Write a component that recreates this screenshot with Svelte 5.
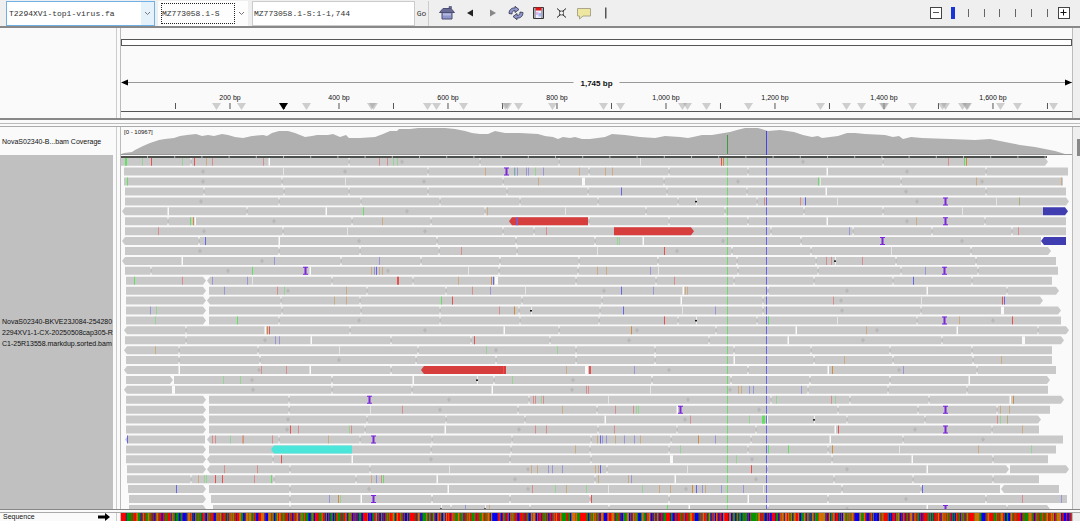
<script>
    const LEFT = 121;
    const WIDTH = 951;
    const LENGTH = 1745;
    const ROW_HEIGHT = 9.92;

    let genome = 'T2294XV1-top1-virus.fa';
    let contig = 'MZ773058.1-S';
    let locus = 'MZ773058.1-S:1-1,744';
    let zoomLevel = 0;

    const pct = (x) => `${((x - LEFT) / WIDTH) * 100}%`;
    const bpPct = (bp) => `${(bp / LENGTH) * 100}%`;

    const ticks = Array.from({ length: 17 }, (_, i) => (i + 1) * 100);
    const labels = [200, 400, 600, 800, 1000, 1200, 1400, 1600];
    const regions = [
        216, 241, 306, 371, 373, 427, 436, 463, 505, 507, 518, 552, 603, 620, 682, 687, 706, 748,
        820, 846, 861, 883, 884, 912, 942, 945, 962, 966, 967, 1000, 1017, 1053,
    ];

    const coverage =
        '121,154 124,153 132,152 135,150 143,146 150,143 159,140 165,139 174,138 180,136 187,135 196,134 202,136 208,135 214,136 222,134 228,135 235,137 243,138 252,136 263,135 267,136 272,133 279,131 288,131 295,133 305,137 312,136 317,135 328,135 333,134 340,137 346,135 349,138 360,138 375,137 383,134 390,131 397,131 399,129 410,129 418,128 430,128 445,128 455,129 465,131 472,133 480,134 488,134 495,131 505,133 520,133 538,134 545,136 553,137 558,139 563,137 570,138 575,137 582,139 590,139 605,137 612,134 625,135 640,137 655,138 665,136 680,137 688,138 693,137 702,135 712,135 718,134 730,132 737,130 745,128 758,128 768,131 780,130 794,132 803,135 812,137 818,136 822,138 838,136 847,133 855,133 865,134 885,135 893,137 899,136 903,139 911,137 922,138 950,139 975,140 990,139 1000,141 1010,143 1020,145 1035,147 1045,149 1055,151 1065,154 1072,155 121,155';

    // a-b: read block, < and > its arrow ends; n: read boundary, d: overlap dot,
    // | : W: gaps, I: insertion, D: deletion, rgboy: mismatches (capital = high quality)
    const reads = [
        '121-1048> G125 G126 g142 R151 g182 n191 R194 o206 r212 r263 |269 n349 r379 r387 g393 g397 d402 n480 n559 :640 R721 O723 d803 n883 r948 G964 O966',
        '124-1068 d203 :283 d345 n428 o485 I506 b514 g515 b517 b526 b528 g535 b543 o579 n589 o605 o612 n669 n748 |827 d907 n986',
        '124-1063 G127 d203 n282 :345 d424 n503 o538 W583 n664 d738 G818 :820 n901 o976 d982 o1061',
        '125-1066 n204 n284 n349 n428 n507 n588 B621 n667 n747 |826 d906 n986',
        '125-1069> d201 n279 n361 n440 n520 n598 n678 D696 n757 r764 r800 B805 :837 d917 I945 :996 y1019',
        '<122-1043 |168 n247 |326 G363 d407 n485 o487 :565 n646 n725 n804 n883 :962 1043-1068>b',
        '125-1066 n168 G190 O193 |195 d274 n352 o382 n431 <509-588r b516 B517 n589 n669 n748 |827 d907 o916 I945 n985',
        '125-1066 r158 d204 n283 :347 d425 n503 n534 r546 614-694>r n771 b849 n853 n932 n1012 r1018',
        '<122-1041 n199 B205 |279 d359 n437 n516 n595 g617 g619 |643 d723 n801 I882 d962 <1041-1066b',
        '125-1051> d200 n279 n360 n439 r461 n517 :597 R664 d677 n732 n811 :891 n971',
        '<122-1056 |182 d262 b274 n341 b379 n421 n500 n579 n658 n737 n816 r826 r831 D835 r862 n896 n976',
        '125-1058 n151 d228 G252 I305 |310 o371 b374 B376 o379 o382 d388 :468 n499 n578 o597 o606 b650 :658 n738 n818 n901 b925 I944 n978',
        '126-206> <207-1052 G134 r182 b212 b247 :252 n332 R397 R398 n413 o458 O491 B493 W496 n576 n656 r674 n734 n814 n893 B913 n972',
        '126-206> 209-1059> b224 r277 g284 d288 o346 n367 n446 r472 b490 :525 d604 B621 b653 |683 o685 o687 n768 d847 |927 n1007',
        '126-206> <207-1043> n281 o334 o346 n360 G441 R452 n522 n602 |681 n763 r833 d841 :921 R1002 B1004',
        '126-206> 209-1061> b150 g156 n282 n361 n440 r499 O514 n519 D531 n600 B623 :682 b715 n763 d842 n921 W1002',
        '126-206> 209-1061 g155 G237 n279 d359 n440 n520 n599 R664 n678 D696 n757 G768 :837 n917 I944 o959 d993 R1012',
        '<124-1069> n186 |265 O267 R269 n350 d425 |504 n559 O631 d637 n716 |796 o866 d877 |957 n1038',
        '125-1064> n186 d265 b275 b279 |311 n391 n471 R474 n550 d629 n709 |788 d863 n942 W1023',
        '<124-1052 o155 n179 n258 :339 n418 g486 d496 g557 n576 n655 n734 n811 n890 n972',
        '126-1052 n179 n260 d339 n416 n496 n576 n655 |734 n814 o844 n893 n973 o1001',
        '<124-1056 |179 d259 r261 r286 |310 n391 <421-506r R503 o566 W586 R589 R590 b634 d669 n748 |828 O832 d899 b903 n977',
        '126-173> 174-1050> g223 g240 d252 n332 |413 D477 n494 g512 d573 n652 n731 n810 n890 |969',
        '<124-1048 W173 d253 n332 n412 |492 d572 r586 r588 :650 d730 o738 o741 b749 b753 b801 n808 n888 n967',
        '126-206> 209-1064> n289 I369 d449 n529 r533 r535 g541 r543 :608 d688 n771 g776 r831 g835 n850 n929 |1010 O1013',
        '126-206> 209-1050 n289 :370 r402 d440 n518 o562 n597 r615 r633 g636 g638 |677 I680 d759 n838 n918 I945 n997 o1000 o1009',
        '126-206> 209-1041> d288 n367 n446 n525 |605 d685 r690 g749 G762 G763 G764 |767 D814 n847 n925 r997 g1000 y1007',
        '126-206> 209-1039 d287 R290 r298 g349 r351 n365 |445 d519 r535 r546 n598 r614 n677 n756 |835 R838 d915 I945 n992 o1022',
        '<125-205 B127 <207-1063 r212 r215 g230 o242 r243 r272 n279 o328 n360 I373 n432 n512 n591 o597 B600 b602 b606 o615 b624 b634 o640 n671 O698 b715 n751 |830 n903 d983',
        '126-206> 209-1056 <271-352c n431 n511 o575 n590 n669 g680 n748 G768 G788 n828 O832 :899 o978 g1031',
        '126-206> <207-1048 n273 R281 |352 d431 n510 n591 W671 g736 d752 n832 |912 n993',
        '127-206> <207-1009> 1010-1069> r224 r257 n290 n370 :449 d528 o531 o537 b548 b552 b562 o595 o598 B600 n607 :687 R751 n767 d847 |927',
        '127-1039 n191 o198 g204 g206 R215 R222 r254 G271 n274 n356 o371 b376 r381 G383 |437 d515 n595 o598 o628 b631 |675 d756 n834 n913 n993',
        '128-206> 209-1000 <1001-1059 B176 n290 d369 |448 d528 r532 g555 o566 g586 :608 g642 o659 o670 d686 O692 B696 b702 o705 b721 b743 :763 n842 n921 B922',
        '129-206> 211-1067 n290 b329 O338 g340 |361 I373 n432 n510 n590 R591 n669 |748 n828 d906 n986 r1022 b1061',
        '129-206> 213-1050> n290 D441 n451 b465 D485 o489 n530 n609 G667 |689 n768 d847 |927 I945 n1007',
    ].map(parseRow);

    const colors = { r: '#e85050', g: '#62e062', b: '#6666e8', o: '#d08c3c', y: '#969632' };
    const fills = { '': '#c9c9c9', r: '#d63e3e', b: '#3f3db0', c: '#4be5da' };

    function parseRow(line) {
        const blocks = [];
        const marks = [];
        for (const token of line.split(' ')) {
            const m = token.match(/^(<?)(\d+)-(\d+)(>?)([rbc]?)$/);
            if (m) blocks.push({ a: +m[2], b: +m[3], left: m[1], right: m[4], kind: m[5] });
            else marks.push({ type: token[0], x: +token.slice(1) });
        }
        return { blocks, marks };
    }

    function blockPath({ a, b, left, right }) {
        const l = left ? `M${a + 3},8.5L${a},4.5L${a + 3},0.5` : `M${a},8.5V0.5`;
        const r = right ? `H${b - 3}L${b},4.5L${b - 3},8.5` : `H${b}V8.5`;
        return l + r + 'Z';
    }

    // one path per base, so the strip stays four elements
    function sequencePaths() {
        const paths = ['', '', '', ''];
        let seed = 773058;
        let base = 0;
        for (let i = 0; i < LENGTH; i++) {
            seed = (seed * 1103515245 + 12345) % 2147483648;
            const n = Math.floor(seed / 65536) % 100;
            if (n > 36) base = n < 56 ? 0 : n < 72 ? 1 : n < 86 ? 2 : 3;
            paths[base] += `M${i},0h1v8h-1z`;
        }
        return paths;
    }
    const bases = sequencePaths();
    const baseColors = ['#ff0000', '#009600', '#0000ff', '#d17105'];
</script>

<div class="browser">
    <header class="toolbar">
        <label class="combo genome">
            <select bind:value={genome} aria-label="Genome">
                <option>T2294XV1-top1-virus.fa</option>
            </select>
            <svg width="7" height="5" viewBox="0 0 7 5"><path d="M1 1l2.5 2.5L6 1" /></svg>
        </label>
        <label class="combo contig">
            <select bind:value={contig} aria-label="Chromosome">
                <option>MZ773058.1-S</option>
            </select>
            <svg width="7" height="5" viewBox="0 0 7 5"><path d="M1 1l2.5 2.5L6 1" /></svg>
        </label>
        <input class="locus" type="text" bind:value={locus} aria-label="Locus" />
        <button class="go">Go</button>

        <nav class="tools">
            <button aria-label="Home">
                <svg width="16" height="14" viewBox="0 0 16 14">
                    <path d="M3 6h10v7H3z" fill="#8f96cc" stroke="#4b4e70" />
                    <path d="M.5 6.5L4 2.5h8l3.500 4z" fill="#686b96" stroke="#4b4e70" />
                    <path d="M10 0.500h2.500v2h-2.500z" fill="#686b96" stroke="#4b4e70" stroke-width=".6" />
                    <path d="M4 7.500h8v2H4z" fill="#b4badf" />
                </svg>
            </button>
            <button aria-label="Back">
                <svg width="16" height="14" viewBox="0 0 16 14"><path d="M11 3.500v7L5 7z" fill="#222" /></svg>
            </button>
            <button aria-label="Forward">
                <svg width="16" height="14" viewBox="0 0 16 14"><path d="M5 3.500v7L11 7z" fill="#888" /></svg>
            </button>
            <button aria-label="Refresh">
                <svg width="16" height="14" viewBox="0 0 16 14" stroke="#30304c" stroke-width=".8" fill="#8f96cc">
                    <path d="M1 7.500C1 3.500 4 1.500 7 2V.3l4 3.200L7 6.500V4.700C5 4.500 4 5.500 4 8z" />
                    <path d="M15 6.500C15 10.500 12 12.500 9 12v1.700l-4-3.200 4-3v1.800c2 .2 3-.8 3-3.300z" />
                </svg>
            </button>
            <button aria-label="Region of interest">
                <svg width="16" height="14" viewBox="0 0 16 14">
                    <path d="M2.500 1.500h10v11h-10z" fill="#eef" stroke="#333" />
                    <path d="M4 1v12M11 1v12" stroke="#444" stroke-width=".8" />
                    <path d="M4.500 1.500h6v3h-6z" fill="#e01818" />
                    <path d="M5 6h2.500v3h-2.500z" fill="#e0b8e8" />
                    <path d="M7.500 7h2.500v3.500h-2.500z" fill="#a8b8f8" />
                </svg>
            </button>
            <button aria-label="Fit to window">
                <svg width="16" height="14" viewBox="0 0 16 14" stroke="#222" fill="none">
                    <path d="M3 2.500l3.500 3M12 2.500L8.500 5.500M3 11.500l3.500-3M12 11.500L8.500 8.500" />
                    <path d="M5.500 5h4v4h-4z" stroke-width=".6" />
                </svg>
            </button>
            <button aria-label="Popup text">
                <svg width="16" height="14" viewBox="0 0 16 14">
                    <path d="M0.500 2.500h13v7.500H6l-3.500 3v-3H0.500z" fill="#eee79f" stroke="#aaa78c" />
                </svg>
            </button>
            <button aria-label="Center line">
                <svg width="16" height="14" viewBox="0 0 16 14"><path d="M5 1.500h1.500v11H5z" fill="#555" /></svg>
            </button>
        </nav>

        <div class="zoom">
            <button class="step" aria-label="Zoom out">
                <svg width="12" height="12" viewBox="0 0 12 12"><path d="M3 5.500h6" stroke="#555" /></svg>
            </button>
            <div class="scale">
                <div class="marks">
                    {#each [0, 1, 2, 3, 4, 5, 6] as mark}
                        <span class="mark"></span>
                    {/each}
                </div>
                <input type="range" min="0" max="6" bind:value={zoomLevel} aria-label="Zoom" />
            </div>
            <button class="step" aria-label="Zoom in">
                <svg width="12" height="12" viewBox="0 0 12 12"><path d="M2.500 5.500h6M5.500 2.500v6" stroke="#111" /></svg>
            </button>
        </div>
    </header>

    <section class="panel">
        <div class="names"></div>
        <div class="divider"></div>
        <div class="data ruler">
            <div class="cytoband"></div>
            <svg class="scale-bar" width="100%" height="71">
                <line x1="5" x2="100%" y1="36.5" y2="36.5" stroke="#999" />
                <path d="M0 36.500l7-3v6z" />
                <svg x="100%" overflow="visible"><path d="M0 36.500l-7-3v6z" /></svg>
                <svg x="50%" overflow="visible">
                    <rect x="-23" y="30" width="46" height="12" fill="#fafafa" />
                    <text class="span" y="40">1,745 bp</text>
                </svg>
                {#each ticks as bp}
                    <line x1={bpPct(bp)} x2={bpPct(bp)} y1="57" y2="63" stroke="#555" />
                {/each}
                {#each labels as bp}
                    <text x={bpPct(bp)} y="54">{bp.toLocaleString('en-US')} bp</text>
                {/each}
                {#each regions as x}
                    <svg x={pct(x)} overflow="visible"><path class="region" d="M-4 57h9l-4.500 7z" /></svg>
                {/each}
                <svg x={pct(283)} overflow="visible"><path d="M-4 57h9l-4.500 7z" /></svg>
                <line x1="0" x2="100%" y1="65.5" y2="65.5" stroke="#555" />
            </svg>
        </div>
        <div class="gutter"></div>
    </section>

    <div class="separator"></div>

    <section class="panel tracks">
        <div class="names">
            <div class="name coverage-name">NovaS02340-B...bam Coverage</div>
            <div class="name reads-name">
                NovaS02340-BKVE23J084-254280<br />2294XV1-1-CX-20250508cap305-R<br />C1-25R13558.markdup.sorted.bam
            </div>
        </div>
        <div class="divider"></div>
        <div class="data">
            <span class="range">[0 - 10967]</span>
            <svg class="plot" width="100%" height="28" viewBox="121 127 951 28" preserveAspectRatio="none">
                <polygon points={coverage} fill="#b0b0b0" />
                <rect x="121" y="154" width="951" height="1" fill="#999" />
                <rect x="727" y="135" width="1" height="19" fill="#3f9a3f" />
                <rect x="766" y="131" width="1" height="24" fill="#4444e8" />
            </svg>
            <svg class="plot" width="100%" height="360" viewBox="121 155 951 360" preserveAspectRatio="none">
                {#each reads as row, i}
                    <g transform="translate(0 {157.2 + i * ROW_HEIGHT})">
                        {#each row.blocks as block}
                            <path d={blockPath(block)} fill={fills[block.kind]} />
                        {/each}
                        {#each row.marks as { type, x }}
                            {#if type === 'n'}
                                <path d="M{x - 1},0.5h2l-1,2.500zM{x - 1},8.500h2l-1,-2.500z" fill="#f5f5f5" />
                                <path d="M{x + 1},2.500l-2,2l2,2z" fill="#bdbdbd" />
                            {:else if type === 'd'}
                                <path d="M{x},2l2,2.500l-2,2.500l-2,-2.500z" fill="#b8b8b8" />
                            {:else if type === '|'}
                                <rect x={x - 0.5} y="0.5" width="1.5" height="8" fill="#fafafa" />
                            {:else if type === ':'}
                                <rect {x} y="0.5" width="1" height="8" fill="#e6e6e6" />
                            {:else if type === 'W'}
                                <rect x={x - 1} y="0.5" width="3" height="8" fill="#fafafa" />
                            {:else if type === 'I'}
                                <path d="M{x - 2},0.5h5v1h-1.500v6h1.500v1h-5v-1h1.500v-6h-1.500z" fill="#7c26dc" />
                            {:else if type === 'D'}
                                <rect {x} y="0.5" width="1" height="8" fill="#eee" />
                                <rect x={x - 1} y="4" width="2" height="1.5" fill="#111" />
                            {:else}
                                <rect
                                    {x}
                                    y="0.5"
                                    width="1"
                                    height="8"
                                    fill={colors[type.toLowerCase()]}
                                    opacity={type === type.toLowerCase() ? 0.5 : 1}
                                />
                            {/if}
                        {/each}
                        <rect x="727" y="0.5" width="1" height="8" fill="#66e066" />
                        <rect x="766" y="0.5" width="1" height="8" fill="#6666e8" />
                    </g>
                {/each}
                <rect x="121" y="156" width="926" height="2" fill="#4c504c" />
                {#each Array.from({ length: 34 }) as _, i}
                    <rect x={147 + i * 27.2} y="156" width="1" height="2" fill="#b0b0b0" />
                {/each}
            </svg>
        </div>
        <div class="gutter"><div class="thumb"></div></div>
    </section>

    <div class="separator lower"></div>

    <section class="panel sequence">
        <div class="names">
            <span>Sequence</span>
            <svg width="12" height="8" viewBox="0 0 12 8"><path d="M0 2.500h7V0l5 4-5 4V5.500H0z" /></svg>
        </div>
        <div class="divider"></div>
        <div class="data">
            <svg class="plot" width="100%" height="8" viewBox="0 0 1745 8" preserveAspectRatio="none">
                <rect width="1745" height="8" fill="#7a4a10" />
                {#each bases as d, i}
                    <path {d} fill={baseColors[i]} />
                {/each}
            </svg>
        </div>
        <div class="gutter"></div>
    </section>
</div>

<style>
    :global(body) {
        margin: 0;
        background: #fafafa;
    }

    .browser {
        display: flex;
        flex-direction: column;
        height: 100vh;
        overflow: hidden;
        font-family: 'Liberation Sans', Arial, sans-serif;
        font-size: 7px;
        color: #111;
    }

    .browser :is(svg) {
        display: block;
    }

    .toolbar {
        display: flex;
        align-items: center;
        flex: none;
        height: 26px;
        padding: 0 10px 0 6px;
        background: #efefef;
        border-bottom: 2px solid #888;
    }

    .combo {
        display: grid;
        align-items: center;
        box-sizing: border-box;
        height: 25px;
        margin-right: 3px;
        background: #fdfdfd;
    }

    .combo select,
    .combo svg {
        grid-area: 1 / 1;
    }

    .combo svg {
        justify-self: end;
        margin-right: 3px;
        fill: none;
        stroke: #777;
        pointer-events: none;
    }

    select,
    .locus,
    .go {
        box-sizing: border-box;
        font-family: 'Liberation Mono', monospace;
        font-size: 8px;
        color: #333;
        border: none;
        border-radius: 0;
        outline: none;
    }

    select {
        appearance: none;
        height: 21px;
        padding: 0 2px;
        background: transparent;
    }

    .genome {
        width: 149px;
        border: 1px solid #6fb0e6;
        background: linear-gradient(to left, #e5f1fb 13px, #fff 13px);
    }

    .contig {
        width: 90px;
        padding: 0 0 0 3px;
    }

    .contig select {
        width: 74px;
        padding: 0;
        border: 1px dotted #222;
    }

    .locus {
        width: 163px;
        height: 25px;
        padding: 0 1px;
        margin-left: 1px;
        background: #fff;
        border: 1px solid #ccc;
    }

    .go {
        width: 14px;
        height: 25px;
        padding: 0;
        background: #efefef;
        border-right: 1px solid #ccc;
    }

    .tools {
        display: flex;
        gap: 7px;
        margin-left: 10px;
    }

    .tools button {
        padding: 0;
        border: none;
        background: none;
    }

    .zoom {
        display: flex;
        align-items: center;
        gap: 9px;
        margin-left: auto;
    }

    .step {
        box-sizing: border-box;
        width: 12px;
        height: 12px;
        padding: 0;
        background: #fff;
        border: 1px solid #444;
        overflow: hidden;
    }

    .step svg {
        margin: -1px;
    }

    .scale {
        display: grid;
        width: 98px;
    }

    .marks,
    .scale input {
        grid-area: 1 / 1;
    }

    .marks {
        display: flex;
        align-items: center;
        justify-content: space-between;
        padding: 0 1px;
    }

    .mark {
        width: 1px;
        height: 8px;
        background: #666;
    }

    .scale input {
        appearance: none;
        width: 100%;
        height: 12px;
        margin: 0;
        background: none;
    }

    .scale input::-webkit-slider-thumb {
        appearance: none;
        width: 4px;
        height: 12px;
        background: #1a35d6;
    }

    .panel {
        display: grid;
        grid-template-columns: 116px 5px 1fr 8px;
        flex: none;
        overflow: hidden;
        background: #fafafa;
    }

    .divider {
        border-left: 1px solid #ccc;
        border-right: 1px solid #bbb;
    }

    .data {
        position: relative;
        min-width: 0;
    }

    .gutter {
        background: #efefef;
        border-left: 1px solid #bbb;
    }

    .ruler {
        height: 90px;
    }

    .cytoband {
        height: 5px;
        margin-top: 11px;
        background: #fff;
        border: 1px solid #555;
    }

    .scale-bar text {
        text-anchor: middle;
        fill: #111;
    }

    .scale-bar .span {
        font-size: 8px;
        font-weight: bold;
    }

    .region {
        fill: #999;
        opacity: 0.45;
    }

    .separator {
        flex: none;
        height: 6px;
        background: #fafafa;
        border-top: 2px solid #888;
        border-bottom: 1px solid #aaa;
        box-shadow: inset 0 3px #fafafa, inset 0 4px #bbb;
    }

    .lower {
        height: 2px;
        border-top-width: 1px;
        box-shadow: none;
    }

    .tracks {
        flex: 1;
        min-height: 0;
    }

    .tracks .names {
        display: flex;
        flex-direction: column;
        margin-right: 3px;
        height: 360px;
        overflow: hidden;
    }

    .name {
        display: flex;
        align-items: center;
        padding-left: 2px;
        white-space: nowrap;
        overflow: hidden;
    }

    .coverage-name {
        flex: none;
        height: 28px;
    }

    .tracks .names {
        height: auto;
        min-height: 0;
    }

    .reads-name {
        flex: 1;
        padding-bottom: 6px;
        line-height: 11px;
        background: #c0c0c0;
    }

    .range {
        position: absolute;
        top: 1px;
        left: 3px;
        font-size: 6px;
        line-height: 8px;
    }

    .thumb {
        width: 3px;
        height: 17px;
        margin: 12px 0 0 auto;
        background: #888;
    }

    .sequence {
        height: 8px;
    }

    .sequence .names {
        display: flex;
        justify-content: space-between;
        padding: 0 6px 0 3px;
    }
</style>
